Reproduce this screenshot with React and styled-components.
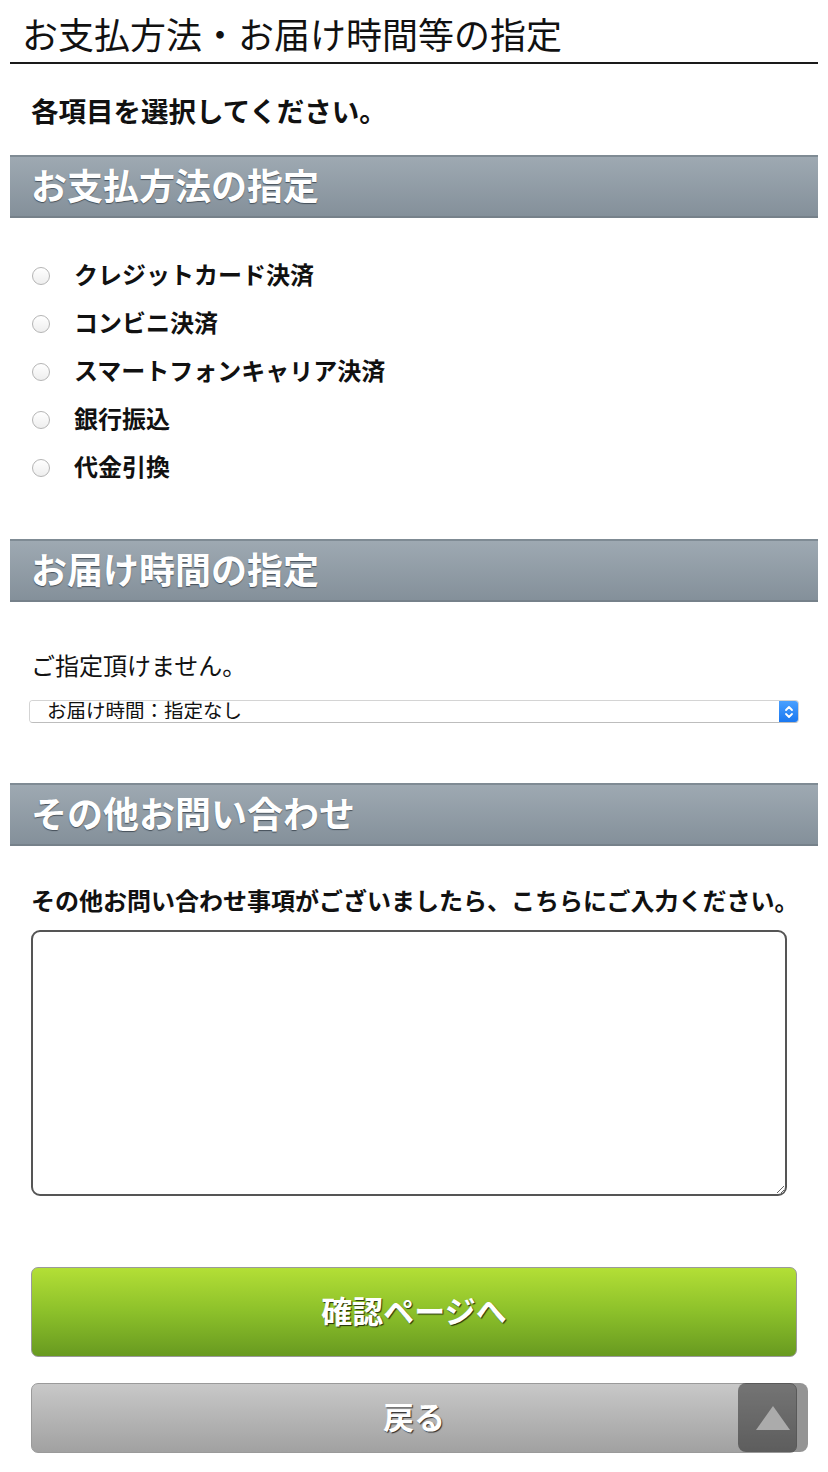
import styled, { createGlobalStyle } from 'styled-components';

const GlobalStyle = createGlobalStyle`
  html, body {
    margin: 0;
    padding: 0;
    background: #fff;
    color: #111;
    font-family: "Noto Sans CJK JP", "Noto Sans", sans-serif;
  }
`

const Page = styled.div`
  padding: 0 10px 19px;
`

const Title = styled.h1`
  margin: 0;
  padding: 8px 0 4px 12px;
  font-size: 36px;
  font-weight: 400;
  line-height: 50px;
  border-bottom: 2px solid #1a1a1a;
`

const Intro = styled.p`
  margin: 28px 0 27px 21px;
  font-size: 27.5px;
  font-weight: 700;
  line-height: 36px;
`

// セクション見出し
const SectionHead = styled.h2`
  margin: 0;
  padding: 0 0 5px 21px;
  height: 54px;
  line-height: 54px;
  font-size: 36px;
  font-weight: 700;
  color: #fff;
  text-shadow: 0 1px 1px rgba(40, 50, 60, 0.7);
  border-top: 2px solid #7f8b94;
  border-bottom: 2px solid #76818a;
  background: linear-gradient(#9ea9b2, #84909a);
`

const RadioList = styled.ul`
  list-style: none;
  margin: 34px 0 47px;
  padding: 0 0 0 22px;
`

const RadioRow = styled.li`
  display: flex;
  align-items: center;
  gap: 24px;
  height: 48px;
`

const Radio = styled.input`
  appearance: none;
  margin: 0;
  width: 18px;
  height: 18px;
  border-radius: 50%;
  border: 1px solid #b5b5b5;
  background: linear-gradient(#fff, #eeeeee);
`

const RadioLabel = styled.label`
  font-size: 24px;
  font-weight: 700;
  line-height: 32px;
  margin-top: -4px;
`

const Note = styled.p`
  margin: ${p => p.$top}px 0 0 21px;
  font-size: 24px;
  font-weight: ${p => (p.$bold ? 700 : 400)};
  line-height: 36px;
`

const SelectBox = styled.div`
  display: flex;
  margin: 17px 19px 60px;
  height: 21px;
  border: 1px solid #d4d4d4;
  border-bottom-color: #bdbdbd;
  border-radius: 4px;
  overflow: hidden;
`

const Select = styled.select`
  flex: 1;
  appearance: none;
  border: none;
  outline: none;
  background: #fff;
  padding: 0 0 3px 17px;
  font-family: inherit;
  font-size: 19.5px;
  line-height: 18px;
  color: #111;
`

const Arrow = styled.div`
  width: 19px;
  display: flex;
  align-items: center;
  justify-content: center;
  background: linear-gradient(#4aa0ff, #1a78f0);
`

const TextArea = styled.textarea`
  display: block;
  box-sizing: border-box;
  margin: 12px 0 0 21px;
  width: 756px;
  height: 266px;
  border: 2px solid #555;
  border-radius: 9px;
  font-family: inherit;
  font-size: 20px;
  padding: 8px;
`

const Button = styled.button`
  display: block;
  box-sizing: border-box;
  width: 766px;
  margin: ${p => p.$top}px 0 0 21px;
  height: ${p => p.$height}px;
  padding-bottom: 6px;
  border: 1px solid #9a9a9a;
  border-radius: 7px;
  font-family: inherit;
  font-size: 31px;
  font-weight: 700;
  color: #fff;
  text-shadow: 1px 1px 1px rgba(0, 0, 0, 0.75);
  background: ${p =>
    p.$green
      ? 'linear-gradient(#b3df36, #8cc02a 50%, #689a20)'
      : 'linear-gradient(#c8c8c8, #a1a1a1)'};
`

// ページトップへ
const TopButton = styled.div`
  position: fixed;
  right: 20px;
  bottom: 20px;
  width: 70px;
  height: 69px;
  border-radius: 8px;
  background: rgba(0, 0, 0, 0.42);
  display: flex;
  align-items: center;
  justify-content: center;
`

const payments = [
  'クレジットカード決済',
  'コンビニ決済',
  'スマートフォンキャリア決済',
  '銀行振込',
  '代金引換',
];

export default function App() {
  return (
    <Page>
      <GlobalStyle />
      <Title>お支払方法・お届け時間等の指定</Title>
      <Intro>各項目を選択してください。</Intro>

      <SectionHead>お支払方法の指定</SectionHead>
      <RadioList>
        {payments.map((p, i) => (
          <RadioRow key={p}>
            <Radio type="radio" name="pay" id={'pay' + i} />
            <RadioLabel htmlFor={'pay' + i}>{p}</RadioLabel>
          </RadioRow>
        ))}
      </RadioList>

      <SectionHead>お届け時間の指定</SectionHead>
      <Note $top={45}>ご指定頂けません。</Note>
      <SelectBox>
        <Select defaultValue="none">
          <option value="none">お届け時間：指定なし</option>
        </Select>
        <Arrow>
          <svg width="10" height="16" viewBox="0 0 10 16" fill="none" stroke="#fff" strokeWidth="1.8" strokeLinecap="round" strokeLinejoin="round">
            <path d="M2 6 L5 3 L8 6" />
            <path d="M2 10 L5 13 L8 10" />
          </svg>
        </Arrow>
      </SelectBox>

      <SectionHead>その他お問い合わせ</SectionHead>
      <Note $top={36} $bold>その他お問い合わせ事項がございましたら、こちらにご入力ください。</Note>
      <TextArea />

      <Button $green $top={71} $height={90}>確認ページへ</Button>
      <Button $top={26} $height={70}>戻る</Button>

      <TopButton>
        <svg width="36" height="26" viewBox="0 0 36 26">
          <path d="M18 1 L35 25 L1 25 Z" fill="#ababab" />
        </svg>
      </TopButton>
    </Page>
  );
}
